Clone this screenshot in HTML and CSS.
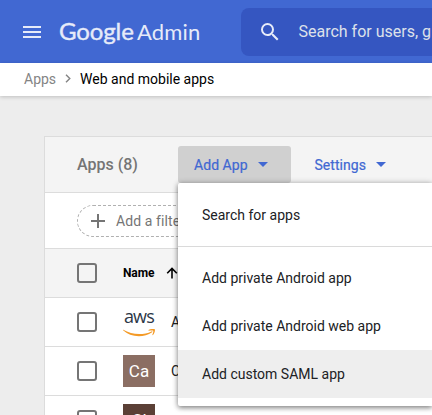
FILE: index.html
```html
<!DOCTYPE html>
<html lang="en">
<head>
<meta charset="utf-8">
<title>Google Admin</title>
<link rel="stylesheet" href="styles.css">
</head>
<body>
<header class="topbar">
  <svg class="burger" width="18" height="12" viewBox="0 0 18 12"><path d="M0 0h18v2H0zM0 5h18v2H0zM0 10h18v2H0z" fill="currentColor"/></svg>
  <div class="brand"><span class="brand-google">Google</span><span class="brand-admin">Admin</span></div>
  <div class="search">
    <svg width="24" height="24" viewBox="0 0 24 24"><path d="M15.5 14h-.79l-.28-.27A6.47 6.47 0 0 0 16 9.5 6.5 6.5 0 1 0 9.5 16c1.61 0 3.09-.59 4.23-1.57l.27.28v.79l5 4.99L20.49 19l-4.99-5zm-6 0a4.5 4.5 0 1 1 0-9 4.5 4.5 0 0 1 0 9z" fill="currentColor"/></svg>
    <span class="search-text">Search for users, g</span>
  </div>
</header>
<nav class="crumbs">
  <span class="crumb-parent">Apps</span>
  <svg class="crumb-sep" width="6" height="9" viewBox="0 0 6 9"><path d="M1 .7 4.800 4.500 1 8.300" fill="none" stroke="currentColor" stroke-width="1.4"/></svg>
  <span>Web and mobile apps</span>
</nav>
<main class="card">
  <div class="toolbar">
    <h1 class="title">Apps (8)</h1>
    <div class="dropdown">
      <button class="btn btn-open">Add App<i class="caret"></i></button>
      <div class="menu">
        <div class="item">Search for apps</div>
        <div class="divider"></div>
        <div class="item">Add private Android app</div>
        <div class="item">Add private Android web app</div>
        <div class="item item-active">Add custom SAML app</div>
      </div>
    </div>
    <button class="btn">Settings<i class="caret"></i></button>
  </div>
  <div class="filters">
    <div class="chip">
      <svg width="14" height="14" viewBox="0 0 14 14"><path d="M7 0v14M0 7h14" stroke="currentColor" stroke-width="2"/></svg>
      <span>Add a filter</span>
    </div>
  </div>
  <div class="row row-head">
    <i class="check"></i>
    <span class="name">Name</span>
    <svg class="arrow" width="12" height="12" viewBox="0 0 12 12"><path d="M6 11.500V1.500M1.200 6.200 6 1.400l4.800 4.800" fill="none" stroke="currentColor" stroke-width="1.6"/></svg>
  </div>
  <div class="row">
    <i class="check"></i>
    <div class="logo">
      <span class="aws">aws</span>
      <svg class="smile" width="32" height="10" viewBox="0 0 32 10"><path d="M.3 .8C8.500 5.800 20 6.600 28.500 2.400c.8-.3 1.200.3.600.8C20.500 9.300 7.200 8.200.1 1.300c-.3-.4-.1-.7.2-.5z" fill="#f49a26"/><path d="M25.500 1c2-1.300 5.600-1.200 6.200-.7.700.6-.1 4.300-2 5.900l-.4-.3c.6-1.400 1.300-3.700.9-4.200-.4-.5-3.100-.1-4.600 0z" fill="#f49a26"/></svg>
    </div>
    <span class="label">A</span>
  </div>
  <div class="row">
    <i class="check"></i>
    <div class="logo tile">Ca</div>
    <span class="label">C</span>
  </div>
  <div class="row">
    <i class="check"></i>
    <div class="logo tile tile-dark">Cl</div>
  </div>
</main>
</body>
</html>
```
FILE: styles.css
```css
* { box-sizing: border-box; }
body {
  margin: 0;
  height: 415px;
  overflow: hidden;
  background: #ededed;
  font-family: Roboto, "Liberation Sans", sans-serif;
  font-size: 14px;
  color: #202124;
}
.topbar {
  display: flex;
  align-items: center;
  height: 63px;
  padding-left: 23px;
  background: #4168d2;
  color: #e6ebf9;
}
.burger { flex: none; }
.brand {
  display: flex;
  align-items: baseline;
  flex: none;
  width: 200px;
  padding-left: 18px;
  white-space: nowrap;
  font-family: Lato, Roboto, sans-serif;
  line-height: 28px;
}
.brand-google { width: 78px; font-size: 24px; letter-spacing: -0.1px; -webkit-text-stroke: 0.4px; }
.brand-admin { font-size: 22px; letter-spacing: 0.15px; }
.search {
  display: flex;
  align-items: center;
  flex: 1 0 0;
  height: 48px;
  padding-left: 17px;
  overflow: hidden;
  border-radius: 8px 0 0 8px;
  background: #3556c1;
}
.search-text { margin-left: 16.500px; font-size: 16px; white-space: nowrap; color: #dde1ea; }
.crumbs {
  display: flex;
  align-items: center;
  height: 33px;
  padding: 0 0 2px 24px;
  background: #fff;
  color: #000;
  box-shadow: 0 1px 4px rgba(0, 0, 0, .2);
}
.crumb-parent, .crumb-sep { color: #848484; }
.crumb-sep { margin: 0 9px; }
.card {
  width: 388px;
  margin: 40px 0 0 44px;
  border: 1px solid #dcdcdc;
  border-right: 0;
  background: #fff;
}
.toolbar {
  display: flex;
  height: 56px;
  padding: 9px 0 0 32px;
  border-bottom: 1px solid #dcdcdc;
  background: #f4f4f4;
}
.title { flex: none; width: 101px; margin: 0; font-size: 16px; font-weight: 500; line-height: 38px; color: #757575; }
.dropdown { position: relative; margin-right: 7.500px; }
.btn {
  display: flex;
  align-items: center;
  height: 37px;
  width: 113px;
  padding: 2px 0 0 16px;
  border: 0;
  border-radius: 3px;
  background: transparent;
  font: 400 14px/35px Roboto, sans-serif;
  letter-spacing: 0.05px;
  color: #4168d2;
  -webkit-text-stroke: 0.2px;
}
.btn-open { background: #d0d0d0; }
.caret { margin: -3px 0 0 10px; border: 5px solid transparent; border-top-color: currentColor; border-bottom: 0; }
.menu {
  position: absolute;
  z-index: 2;
  top: 37px;
  left: 0;
  width: 254px;
  padding: 8px 0;
  border-radius: 2px 0 0 2px;
  background: #fff;
  box-shadow: 0 2px 5px rgba(0, 0, 0, .4), 0 0 6px rgba(0, 0, 0, .2);
}
.item { height: 48px; padding-left: 24px; line-height: 48px; white-space: nowrap; }
.item-active { background: #eee; }
.divider { height: 1px; margin: 7px 0; background: #dadada; }
.filters { height: 56px; padding: 12px 32px; border-bottom: 1px solid #dcdcdc; }
.chip {
  display: flex;
  align-items: center;
  gap: 11px;
  width: 150px;
  height: 32px;
  padding-left: 13px;
  border: 1px dashed #b0b0b0;
  border-radius: 16px;
  color: #757575;
  letter-spacing: 0.1px;
}
.row { display: flex; align-items: center; height: 49px; padding-left: 32px; border-bottom: 1px solid #dcdcdc; }
.row-head { background: #f4f4f4; color: #000; }
.check { flex: none; width: 20px; height: 20px; margin-right: 26px; border: 2px solid #757575; border-radius: 3px; }
.name { width: 43px; font-size: 12px; font-weight: 700; letter-spacing: -0.1px; }
.logo { flex: none; width: 32px; height: 32px; margin-right: 16px; }
.aws { display: block; height: 23px; text-align: center; font: 500 18px/20px "Open Sans", sans-serif; letter-spacing: -0.8px; color: #2c3747; }
.smile { display: block; }
.tile { background: #8b6e63; color: #fff; font-size: 17px; line-height: 33px; text-align: center; }
.tile-dark { background: #5b4036; }
.label { white-space: nowrap; }
```
